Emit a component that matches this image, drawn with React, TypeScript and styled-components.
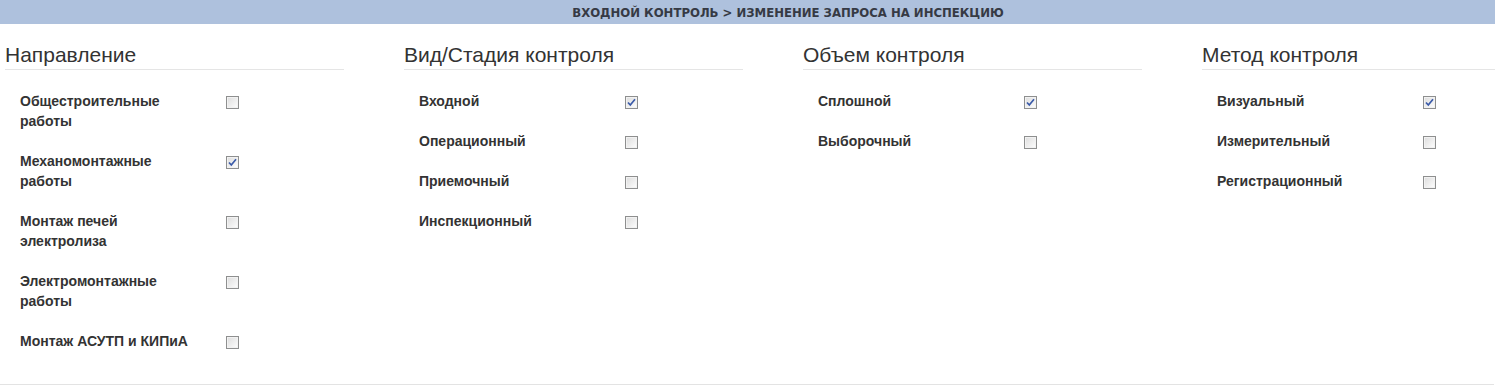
import React from 'react';
import styled, { createGlobalStyle } from 'styled-components';

const GlobalStyle = createGlobalStyle`
  html, body {
    margin: 0;
    padding: 0;
    background: #fff;
    font-family: 'Liberation Sans', Arial, sans-serif;
    overflow: hidden;
  }
`;

const Page = styled.div`
  width: 1495px;
  height: 391px;
  overflow: hidden;
`;

const TitleBar = styled.div`
  height: 24px;
  background-color: #aec1dd;
  display: flex;
  align-items: center;
  justify-content: center;
  padding-left: 81px;
  box-sizing: border-box;
`;

const Title = styled.span`
  font-family: 'DejaVu Sans Condensed', 'DejaVu Sans', sans-serif;
  font-stretch: condensed;
  font-size: 13px;
  font-weight: bold;
  color: #363a44;
`;

const Columns = styled.div`
  display: flex;
  gap: 60px;
  padding: 20px 0 13px 5px;
  border-bottom: 1px solid #e3e3e3;
  width: 1494px;
  box-sizing: border-box;
`;

const Column = styled.div`
  flex: 0 0 339px;
  display: flex;
  flex-direction: column;
`;

const Heading = styled.h2`
  margin: 0 0 21px;
  font-size: 21px;
  font-weight: normal;
  line-height: 22px;
  color: #333;
  padding-bottom: 3px;
  border-bottom: 1px solid #e5e5e5;
`;

const Row = styled.label`
  display: flex;
  align-items: flex-start;
  padding-left: 15px;
  margin-bottom: 20px;
`;

const Label = styled.span`
  width: 176px;
  margin-right: 30px;
  font-size: 14px;
  font-weight: bold;
  line-height: 20px;
  color: #333;
`;

const Box = styled.span`
  width: 13px;
  height: 13px;
  margin-top: 5px;
  box-sizing: border-box;
  border: 1px solid #8e8f8f;
  background: linear-gradient(135deg, #dcdcdc 0%, #f4f4f4 70%, #ffffff 100%);
  box-shadow: inset 0 0 0 1px #f2f2f2;
  display: flex;
  align-items: center;
  justify-content: center;
`;

const Checkbox = ({ checked }: { checked?: boolean }) => (
  <Box>
    {checked && (
      <svg width="9" height="9" viewBox="0 0 9 9">
        <path d="M1 4.5 L3.3 7 L8 1.3" fill="none" stroke="#3a5aa8" strokeWidth="1.7" />
      </svg>
    )}
  </Box>
);

type Item = { label: string; checked?: boolean };

const groups: { title: string; items: Item[] }[] = [
  {
    title: 'Направление',
    items: [
      { label: 'Общестроительные работы' },
      { label: 'Механомонтажные работы', checked: true },
      { label: 'Монтаж печей электролиза' },
      { label: 'Электромонтажные работы' },
      { label: 'Монтаж АСУТП и КИПиА' },
    ],
  },
  {
    title: 'Вид/Стадия контроля',
    items: [
      { label: 'Входной', checked: true },
      { label: 'Операционный' },
      { label: 'Приемочный' },
      { label: 'Инспекционный' },
    ],
  },
  {
    title: 'Объем контроля',
    items: [{ label: 'Сплошной', checked: true }, { label: 'Выборочный' }],
  },
  {
    title: 'Метод контроля',
    items: [
      { label: 'Визуальный', checked: true },
      { label: 'Измерительный' },
      { label: 'Регистрационный' },
    ],
  },
];

const App = () => (
  <Page>
    <GlobalStyle />
    <TitleBar>
      <Title>ВХОДНОЙ КОНТРОЛЬ &gt; ИЗМЕНЕНИЕ ЗАПРОСА НА ИНСПЕКЦИЮ</Title>
    </TitleBar>
    <Columns>
      {groups.map((g) => (
        <Column key={g.title}>
          <Heading>{g.title}</Heading>
          {g.items.map((it) => (
            <Row key={it.label}>
              <Label>{it.label}</Label>
              <Checkbox checked={it.checked} />
            </Row>
          ))}
        </Column>
      ))}
    </Columns>
  </Page>
);

export default App;
